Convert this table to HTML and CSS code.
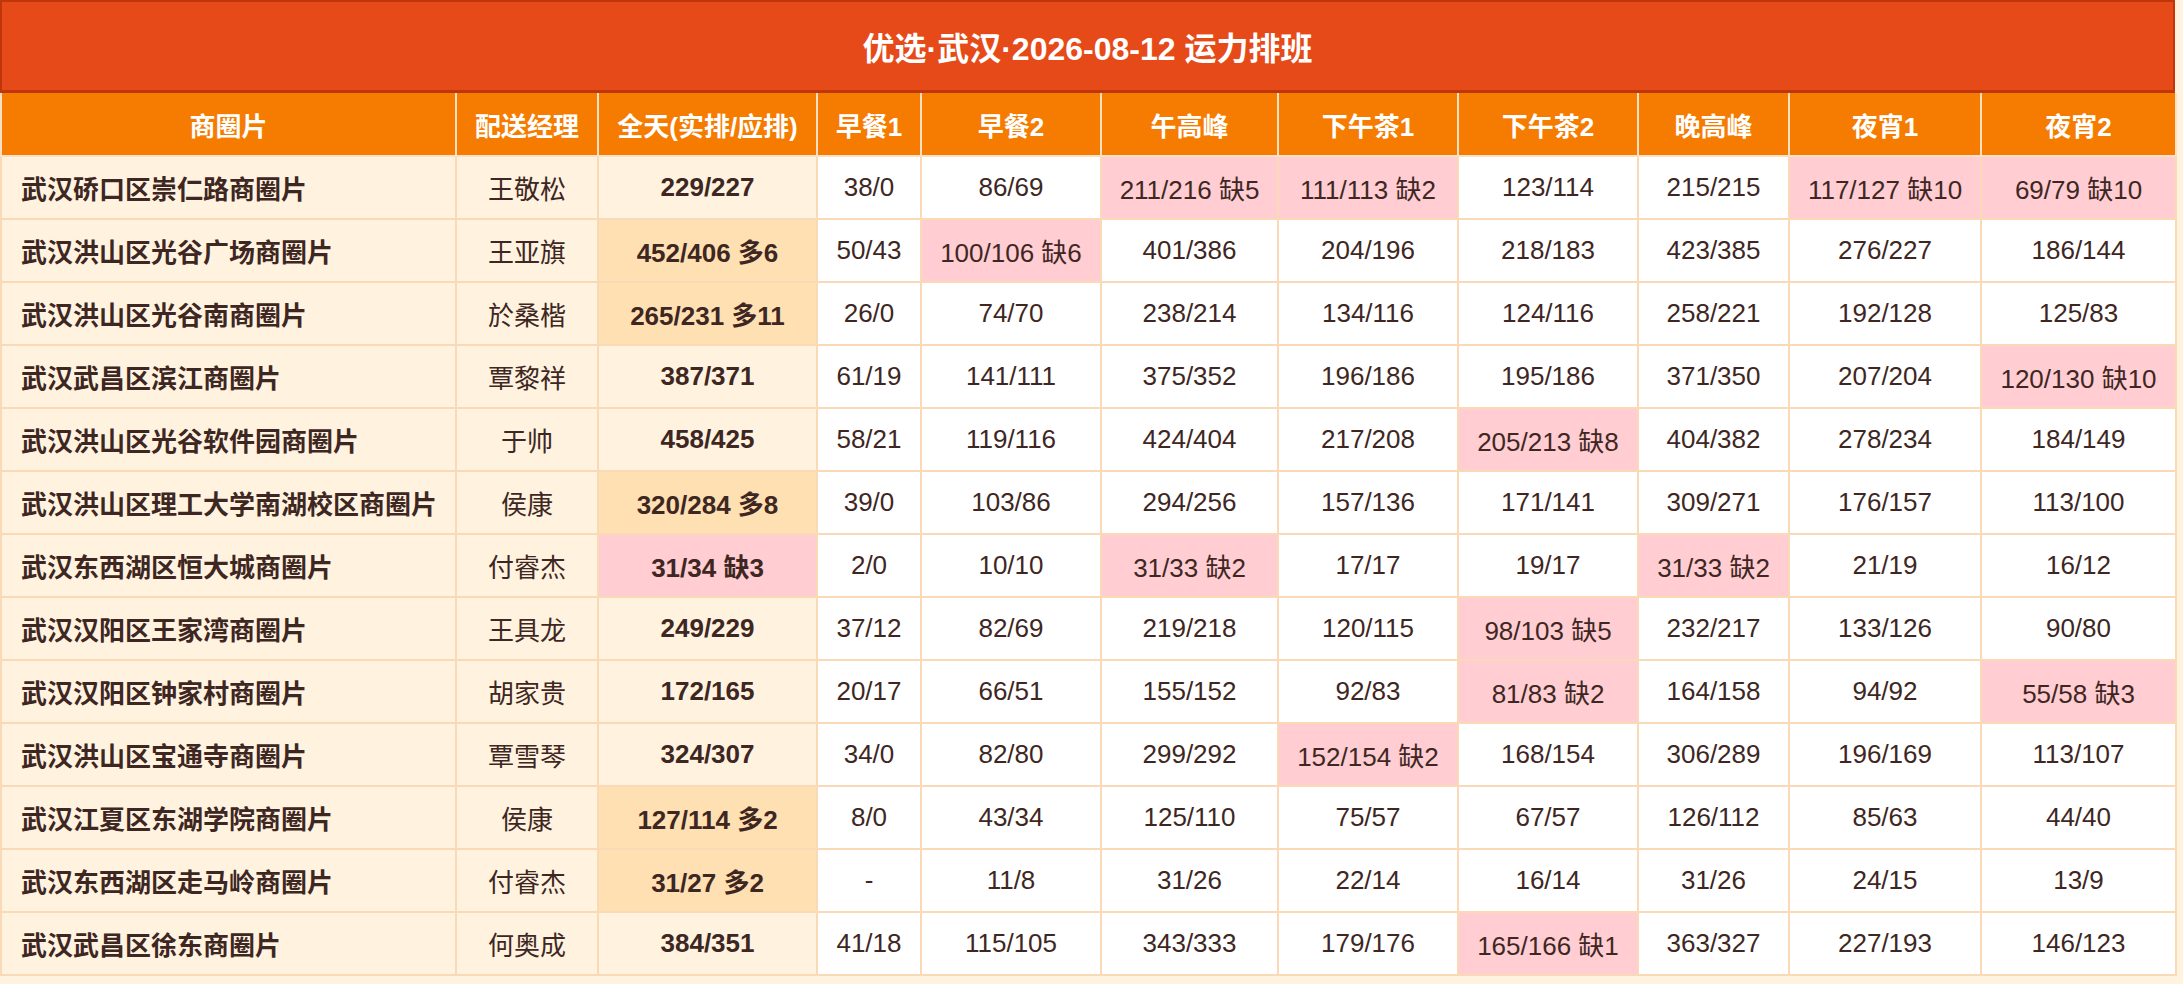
FILE: index.html
```html
<!DOCTYPE html>
<html lang="zh-CN">
<head>
<meta charset="utf-8">
<title>优选·武汉·2026-08-12 运力排班</title>
<link rel="stylesheet" href="styles.css">
</head>
<body>
<div class="sheet">
  <div class="title">优选·武汉·2026-08-12 运力排班</div>
  <table class="grid">
    <colgroup>
      <col class="c-area"><col class="c-mgr"><col class="c-day"><col class="c-b1"><col class="c-b2"><col class="c-noon"><col class="c-t1"><col class="c-t2"><col class="c-eve"><col class="c-n1"><col class="c-n2">
    </colgroup>
    <thead>
      <tr><th>商圈片</th><th>配送经理</th><th>全天(实排/应排)</th><th>早餐1</th><th>早餐2</th><th>午高峰</th><th>下午茶1</th><th>下午茶2</th><th>晚高峰</th><th>夜宵1</th><th>夜宵2</th></tr>
    </thead>
    <tbody>
      <tr><td class="area">武汉硚口区崇仁路商圈片</td><td class="mgr">王敬松</td><td class="day">229/227</td><td>38/0</td><td>86/69</td><td class="short">211/216 缺5</td><td class="short">111/113 缺2</td><td>123/114</td><td>215/215</td><td class="short">117/127 缺10</td><td class="short">69/79 缺10</td></tr>
      <tr><td class="area">武汉洪山区光谷广场商圈片</td><td class="mgr">王亚旗</td><td class="day over">452/406 多6</td><td>50/43</td><td class="short">100/106 缺6</td><td>401/386</td><td>204/196</td><td>218/183</td><td>423/385</td><td>276/227</td><td>186/144</td></tr>
      <tr><td class="area">武汉洪山区光谷南商圈片</td><td class="mgr">於桑楷</td><td class="day over">265/231 多11</td><td>26/0</td><td>74/70</td><td>238/214</td><td>134/116</td><td>124/116</td><td>258/221</td><td>192/128</td><td>125/83</td></tr>
      <tr><td class="area">武汉武昌区滨江商圈片</td><td class="mgr">覃黎祥</td><td class="day">387/371</td><td>61/19</td><td>141/111</td><td>375/352</td><td>196/186</td><td>195/186</td><td>371/350</td><td>207/204</td><td class="short">120/130 缺10</td></tr>
      <tr><td class="area">武汉洪山区光谷软件园商圈片</td><td class="mgr">于帅</td><td class="day">458/425</td><td>58/21</td><td>119/116</td><td>424/404</td><td>217/208</td><td class="short">205/213 缺8</td><td>404/382</td><td>278/234</td><td>184/149</td></tr>
      <tr><td class="area">武汉洪山区理工大学南湖校区商圈片</td><td class="mgr">侯康</td><td class="day over">320/284 多8</td><td>39/0</td><td>103/86</td><td>294/256</td><td>157/136</td><td>171/141</td><td>309/271</td><td>176/157</td><td>113/100</td></tr>
      <tr><td class="area">武汉东西湖区恒大城商圈片</td><td class="mgr">付睿杰</td><td class="day short">31/34 缺3</td><td>2/0</td><td>10/10</td><td class="short">31/33 缺2</td><td>17/17</td><td>19/17</td><td class="short">31/33 缺2</td><td>21/19</td><td>16/12</td></tr>
      <tr><td class="area">武汉汉阳区王家湾商圈片</td><td class="mgr">王具龙</td><td class="day">249/229</td><td>37/12</td><td>82/69</td><td>219/218</td><td>120/115</td><td class="short">98/103 缺5</td><td>232/217</td><td>133/126</td><td>90/80</td></tr>
      <tr><td class="area">武汉汉阳区钟家村商圈片</td><td class="mgr">胡家贵</td><td class="day">172/165</td><td>20/17</td><td>66/51</td><td>155/152</td><td>92/83</td><td class="short">81/83 缺2</td><td>164/158</td><td>94/92</td><td class="short">55/58 缺3</td></tr>
      <tr><td class="area">武汉洪山区宝通寺商圈片</td><td class="mgr">覃雪琴</td><td class="day">324/307</td><td>34/0</td><td>82/80</td><td>299/292</td><td class="short">152/154 缺2</td><td>168/154</td><td>306/289</td><td>196/169</td><td>113/107</td></tr>
      <tr><td class="area">武汉江夏区东湖学院商圈片</td><td class="mgr">侯康</td><td class="day over">127/114 多2</td><td>8/0</td><td>43/34</td><td>125/110</td><td>75/57</td><td>67/57</td><td>126/112</td><td>85/63</td><td>44/40</td></tr>
      <tr><td class="area">武汉东西湖区走马岭商圈片</td><td class="mgr">付睿杰</td><td class="day over">31/27 多2</td><td>-</td><td>11/8</td><td>31/26</td><td>22/14</td><td>16/14</td><td>31/26</td><td>24/15</td><td>13/9</td></tr>
      <tr><td class="area">武汉武昌区徐东商圈片</td><td class="mgr">何奥成</td><td class="day">384/351</td><td>41/18</td><td>115/105</td><td>343/333</td><td>179/176</td><td class="short">165/166 缺1</td><td>363/327</td><td>227/193</td><td>146/123</td></tr>
    </tbody>
  </table>
</div>
</body>
</html>
```

FILE: styles.css
```css
html, body {
  margin: 0;
  padding: 0;
  background: #fff3e0;
}

body {
  font-family: "Liberation Sans", "Noto Sans CJK SC", sans-serif;
  color: #3e2723;
}

.sheet {
  width: 2175px;
}

.title {
  box-sizing: border-box;
  height: 93px;
  display: flex;
  align-items: center;
  justify-content: center;
  background: #e64a19;
  border: 2px solid #bf360c;
  border-bottom-width: 3px;
  color: #ffffff;
  font-size: 32px;
  font-weight: bold;
}

.grid {
  width: 2175px;
  table-layout: fixed;
  border-collapse: collapse;
  font-size: 26px;
}

.c-area { width: 455px; }
.c-mgr { width: 142px; }
.c-day { width: 219px; }
.c-b1 { width: 104px; }
.c-b2 { width: 180px; }
.c-noon { width: 177px; }
.c-t1 { width: 180px; }
.c-t2 { width: 180px; }
.c-eve { width: 151px; }
.c-n1 { width: 192px; }
.c-n2 { width: 195px; }

.grid tr {
  height: 63px;
}

.grid th,
.grid td {
  padding: 0 4px;
  border: 2px solid #f9d9b6;
  text-align: center;
  vertical-align: middle;
  white-space: nowrap;
}

.grid th {
  background: #f57c00;
  color: #ffffff;
  font-weight: bold;
  border-color: #fbe0c4;
  border-top: none;
}

.grid td {
  background: #ffffff;
}

.grid td.area {
  background: #fff3e0;
  text-align: left;
  padding-left: 19px;
  font-weight: bold;
}

.grid td.mgr {
  background: #fff3e0;
}

.grid td.day {
  background: #fff3e0;
  font-weight: bold;
}

.grid td.over {
  background: #ffe0b2;
}

.grid td.short {
  background: #ffcdd2;
}
```
